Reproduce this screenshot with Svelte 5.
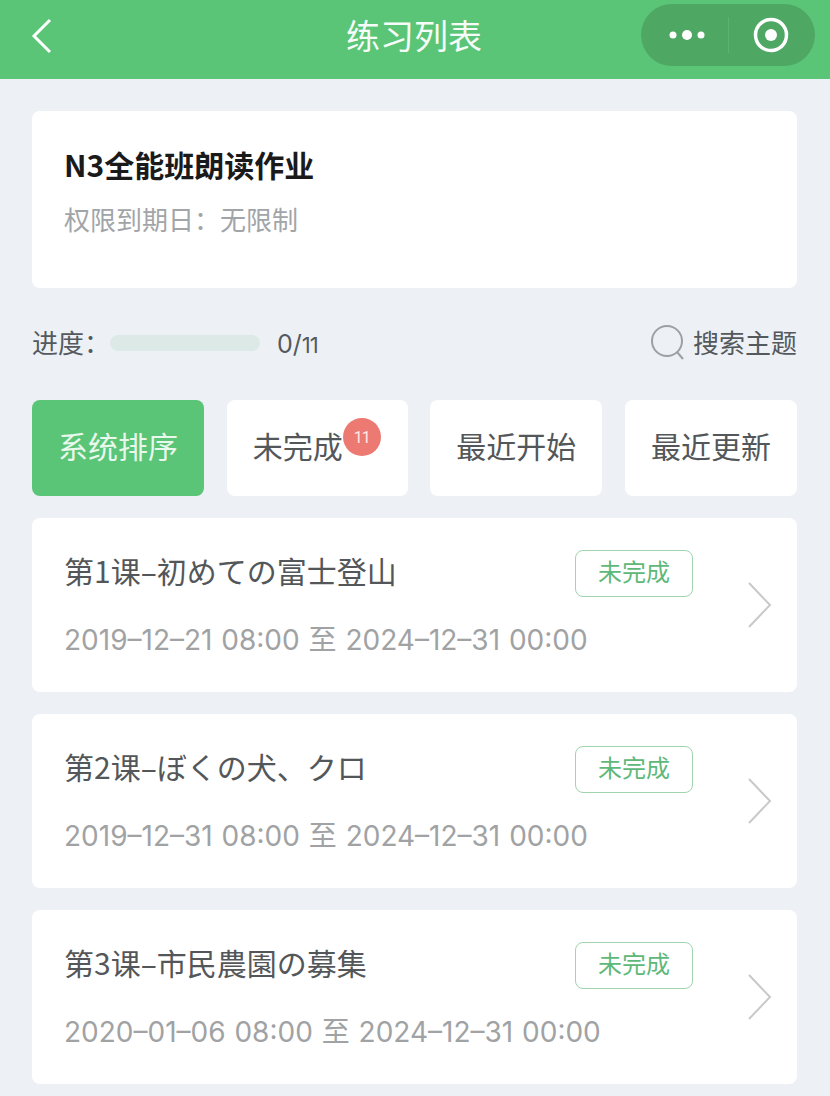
<script lang="ts">
    const tabs = [
        { label: "系统排序", active: true },
        { label: "未完成", badge: 11 },
        { label: "最近开始" },
        { label: "最近更新" },
    ];

    const lessons = [
        { title: "第1课–初めての富士登山", start: "2019–12–21 08:00", end: "2024–12–31 00:00" },
        { title: "第2课–ぼくの犬、クロ", start: "2019–12–31 08:00", end: "2024–12–31 00:00" },
        { title: "第3课–市民農園の募集", start: "2020–01–06 08:00", end: "2024–12–31 00:00" },
    ];
</script>

<div class="page">
    <header class="nav">
        <svg class="back" width="22" height="36" viewBox="0 0 22 36" fill="none">
            <path d="M19 2 L3 18 L19 34" stroke="#fff" stroke-width="3" />
        </svg>
        <h1>练习列表</h1>
        <div class="capsule">
            <svg width="40" height="14" viewBox="0 0 40 14" fill="#fff">
                <circle cx="6" cy="7" r="3.5" />
                <circle cx="20" cy="7" r="5" />
                <circle cx="34" cy="7" r="3.5" />
            </svg>
            <span class="sep"></span>
            <svg width="36" height="36" viewBox="0 0 36 36" fill="none">
                <circle cx="18" cy="18" r="15.5" stroke="#fff" stroke-width="3.5" />
                <circle cx="18" cy="18" r="6" fill="#fff" />
            </svg>
        </div>
    </header>

    <main>
        <section class="course">
            <h2>N3全能班朗读作业</h2>
            <p>权限到期日：无限制</p>
        </section>

        <div class="progress">
            <span class="progress-label">进度：</span>
            <span class="bar"></span>
            <span class="count">0/<small>11</small></span>
            <span class="search">
                <svg width="36" height="36" viewBox="0 0 36 36" fill="none" stroke="#9ba1a3" stroke-width="2">
                    <circle cx="17" cy="16" r="15" />
                    <path d="M27 27 L33 34" />
                </svg>
                <span class="search-text">搜索主题</span>
            </span>
        </div>

        <div class="tabs">
            {#each tabs as tab}
                <div class="tab" class:active={tab.active} class:wide={tab.badge}>
                    {tab.label}
                    {#if tab.badge}
                        <span class="badge">{tab.badge}</span>
                    {/if}
                </div>
            {/each}
        </div>

        <div class="list">
            {#each lessons as lesson}
                <article class="lesson">
                    <div class="lesson-body">
                        <div class="lesson-top">
                            <h3>{lesson.title}</h3>
                            <span class="status">未完成</span>
                        </div>
                        <div class="dates">{lesson.start} 至 {lesson.end}</div>
                    </div>
                    <svg class="chevron" width="24" height="46" viewBox="0 0 24 46" fill="none">
                        <path d="M1 1 L22 23 L1 45" stroke="#c9c9c9" stroke-width="2" />
                    </svg>
                </article>
            {/each}
        </div>
    </main>
</div>

<style>
    :global(body) {
        margin: 0;
        background: #edf1f5;
        font-family: "Noto Sans CJK SC", "Noto Sans", sans-serif;
    }

    .page {
        height: 1096px;
        overflow: hidden;
        background: #edf1f5;
    }

    .nav {
        position: relative;
        height: 79px;
        background: #5ac576;
        display: flex;
        align-items: center;
        justify-content: center;
    }

    .back {
        position: absolute;
        left: 31px;
        top: 18px;
    }

    h1 {
        margin: 0 2px 10px 0;
        font-size: 34px;
        font-weight: 400;
        color: #f6fcf7;
    }

    .capsule {
        position: absolute;
        left: 641px;
        top: 4px;
        width: 174px;
        height: 62px;
        border-radius: 31px;
        background: #4fa764;
        display: flex;
        align-items: center;
        box-sizing: border-box;
        padding-left: 26px;
    }

    .sep {
        width: 1px;
        height: 36px;
        margin: 0 24px 0 21px;
        background: #5cb271;
    }

    main {
        padding: 32px 33px 0 32px;
    }

    .course {
        height: 177px;
        box-sizing: border-box;
        padding: 31px 32px 0;
        background: #fff;
        border-radius: 8px;
    }

    h2 {
        margin: 0;
        font-size: 30px;
        line-height: 44px;
        font-weight: 700;
        color: #1a1a1a;
    }

    .course p {
        margin: 13px 0 0;
        font-size: 26px;
        line-height: 40px;
        color: #a2a5a8;
    }

    .progress {
        height: 110px;
        padding-bottom: 2px;
        display: flex;
        align-items: center;
        font-size: 26px;
        color: #54595e;
    }

    .progress-label {
        width: 78px;
        margin-bottom: 4px;
    }

    .bar {
        width: 150px;
        height: 16px;
        border-radius: 8px;
        background: #dde9e6;
    }

    .count {
        margin-left: 17px;
        margin-top: 2px;
        font-family: Inter, sans-serif;
        font-size: 25px;
    }

    .count small {
        font-size: 22px;
        letter-spacing: -1px;
    }

    .search {
        margin-left: auto;
        display: flex;
        align-items: center;
        gap: 7px;
    }

    .search-text {
        margin-bottom: 4px;
    }

    .tabs {
        display: flex;
        justify-content: space-between;
    }

    .tab {
        position: relative;
        width: 172px;
        height: 96px;
        box-sizing: border-box;
        padding-bottom: 6px;
        border-radius: 8px;
        background: #fff;
        display: flex;
        align-items: center;
        justify-content: center;
        font-size: 30px;
        color: #54575a;
    }

    .tab.wide {
        width: 181px;
        justify-content: flex-start;
        padding-left: 26px;
    }

    .tab.active {
        background: #5ac576;
        color: #e9f8ed;
    }

    .badge {
        position: absolute;
        left: 116px;
        top: 18px;
        width: 38px;
        height: 38px;
        border-radius: 50%;
        background: #ec7a72;
        color: #fde9e7;
        font-family: Roboto, sans-serif;
        font-size: 16px;
        letter-spacing: -1px;
        display: flex;
        align-items: center;
        justify-content: center;
    }

    .list {
        margin-top: 22px;
        display: flex;
        flex-direction: column;
        gap: 22px;
    }

    .lesson {
        position: relative;
        height: 174px;
        box-sizing: border-box;
        padding: 32px 104px 0 32px;
        background: #fff;
        border-radius: 8px;
    }

    .lesson-top {
        display: flex;
        align-items: flex-start;
        justify-content: space-between;
    }

    h3 {
        margin: -3px 0 0;
        font-size: 30px;
        line-height: 46px;
        font-weight: 400;
        color: #54575a;
    }

    .status {
        width: 118px;
        height: 47px;
        box-sizing: border-box;
        padding-bottom: 6px;
        border: 1px solid #9fd4ae;
        border-radius: 8px;
        display: flex;
        align-items: center;
        justify-content: center;
        font-size: 24px;
        color: #5fb878;
    }

    .dates {
        margin-top: 23px;
        font-family: Inter, "Noto Sans CJK SC", sans-serif;
        font-size: 28px;
        line-height: 40px;
        word-spacing: 1px;
        color: #a0a2a4;
    }

    .chevron {
        position: absolute;
        right: 25px;
        top: 64px;
    }
</style>
